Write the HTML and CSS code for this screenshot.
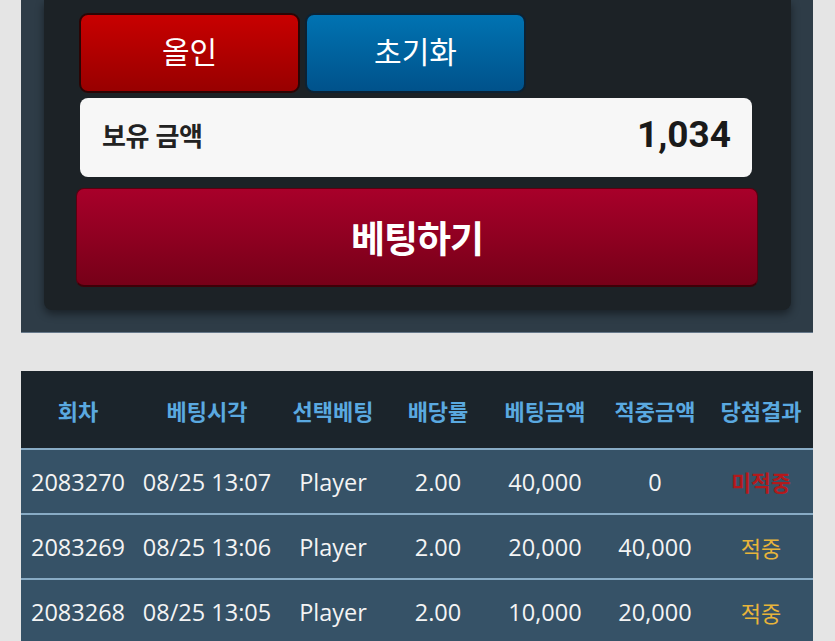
FILE: index.html
```html
<!DOCTYPE html>
<html lang="ko">
<head>
<meta charset="utf-8">
<link rel="stylesheet" href="styles.css">
</head>
<body>
<section class="bet-panel">
  <div class="bet-inner">
    <div class="quick-row">
      <button class="btn btn-allin">올인</button>
      <button class="btn btn-reset">초기화</button>
    </div>
    <div class="balance">
      <span class="balance-label">보유 금액</span>
      <span class="balance-value">1,034</span>
    </div>
    <button class="btn btn-bet">베팅하기</button>
  </div>
</section>

<table class="history">
  <colgroup>
    <col class="c1"><col class="c2"><col class="c3"><col class="c4"><col class="c5"><col class="c6"><col class="c7">
  </colgroup>
  <thead>
    <tr>
      <th>회차</th><th>베팅시각</th><th>선택베팅</th><th>배당률</th><th>베팅금액</th><th>적중금액</th><th>당첨결과</th>
    </tr>
  </thead>
  <tbody>
    <tr>
      <td>2083270</td><td>08/25 13:07</td><td>Player</td><td>2.00</td><td>40,000</td><td>0</td><td class="lose">미적중</td>
    </tr>
    <tr>
      <td>2083269</td><td>08/25 13:06</td><td>Player</td><td>2.00</td><td>20,000</td><td>40,000</td><td class="win">적중</td>
    </tr>
    <tr>
      <td>2083268</td><td>08/25 13:05</td><td>Player</td><td>2.00</td><td>10,000</td><td>20,000</td><td class="win">적중</td>
    </tr>
  </tbody>
</table>
</body>
</html>
```

FILE: styles.css
```css
html, body {
  margin: 0;
  padding: 0;
  background: #e5e5e5;
  height: 641px;
  overflow: hidden;
  font-family: "Open Sans", "Noto Sans CJK KR", sans-serif;
}

.bet-panel {
  margin: 0 22px 0 21px;
  background: #2e3c47;
  border-bottom: 1px solid #66788a;
  padding: 0 22px 22px 23px;
}

.bet-inner {
  background: #1c2226;
  border-radius: 0 0 8px 8px;
  box-shadow: 0 4px 8px rgba(0, 0, 0, 0.45);
  padding: 13px 39px 23px 35px;
  display: flex;
  flex-direction: column;
}

.btn {
  font-family: "Noto Sans CJK KR", sans-serif;
  color: #ffffff;
  cursor: pointer;
  padding: 0;
}

.quick-row {
  display: grid;
  grid-template-columns: 221px 221px 1fr;
  gap: 5px;
  height: 80px;
}

.btn-allin {
  background: linear-gradient(#c80000, #980000);
  border: 2px solid #2a0505;
  border-radius: 9px;
  font-size: 30px;
  font-weight: 400;
  padding-bottom: 6px;
}

.btn-reset {
  background: linear-gradient(#0073b2, #00528b);
  border: 2px solid #0c2234;
  border-radius: 9px;
  font-size: 30px;
  font-weight: 400;
  padding-bottom: 6px;
}

.balance {
  margin-top: 5px;
  margin-left: 1px;
  height: 79px;
  background: #f7f7f7;
  border-radius: 8px;
  display: flex;
  align-items: center;
  justify-content: space-between;
  padding: 0 21px 6px 22px;
  box-sizing: border-box;
}

.balance-label {
  font-family: "Noto Sans CJK KR", sans-serif;
  font-weight: 700;
  font-size: 26px;
  color: #222;
  letter-spacing: -0.5px;
}

.balance-value {
  font-family: Roboto, "Liberation Sans", sans-serif;
  font-weight: 700;
  font-size: 37px;
  color: #1a1a1a;
}

.btn-bet {
  margin: 11px -6px 0 -3px;
  height: 99px;
  background: linear-gradient(#a8002a, #760018);
  border: 1px solid #5a0010;
  border-bottom: 2px solid #3e0008;
  border-radius: 8px;
  font-size: 37px;
  font-weight: 700;
  letter-spacing: -1px;
}

.history {
  margin: 38px 22px 0 21px;
  width: 792px;
  border-collapse: collapse;
  table-layout: fixed;
}

.c1 { width: 114px; }
.c2 { width: 144px; }
.c3 { width: 108px; }
.c4 { width: 102px; }
.c5 { width: 112px; }
.c6 { width: 108px; }
.c7 { width: 104px; }

.history th {
  background: #1b242b;
  color: #5aa9e0;
  font-family: "Noto Sans CJK KR", sans-serif;
  font-weight: 700;
  font-size: 22px;
  height: 77px;
  padding: 0;
  text-align: center;
  white-space: nowrap;
}

.history td {
  background: #365267;
  color: #f4f4f4;
  font-size: 23.5px;
  height: 63px;
  padding: 0;
  text-align: center;
  white-space: nowrap;
  border-top: 2px solid #88abc5;
}

.history td.lose {
  color: #b3191b;
  font-weight: 700;
  font-size: 21.5px;
}

.history td.win {
  color: #e8b43a;
  font-size: 22px;
}
```
